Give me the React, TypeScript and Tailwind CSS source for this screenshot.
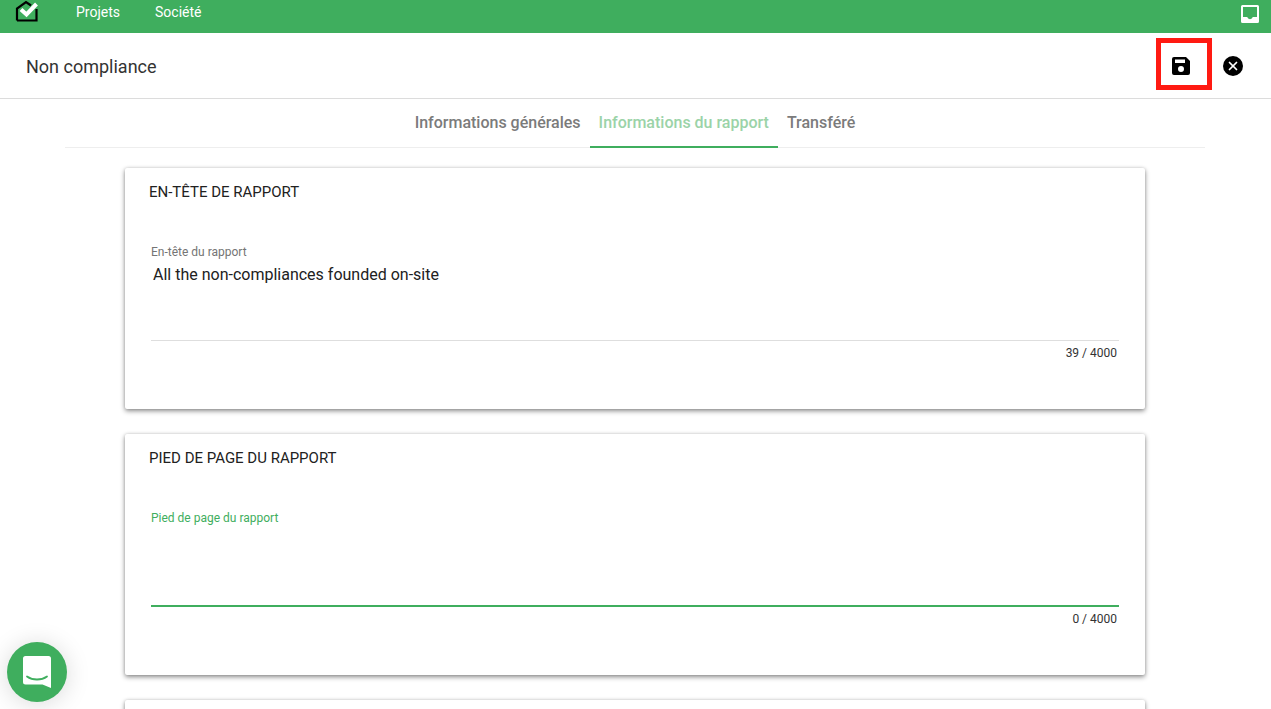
import { X } from "lucide-react"

function Logo() {
  return (
    <svg width="24" height="22" viewBox="0 0 24 22" fill="none">
      <path d="M2 20.5V8.5L11 2l5 3.5" stroke="#000" strokeWidth="2.2" />
      <path d="M2 20.5h19.5V9" stroke="#000" strokeWidth="2.2" />
      <path d="M6 9.5l5.500 5L21.500 4" stroke="#fff" strokeWidth="4" />
    </svg>
  )
}

function InboxIcon() {
  return (
    <svg width="20" height="20" viewBox="0 0 20 20">
      <path
        fill="#fff"
        fillRule="evenodd"
        d="M2.500 1h15A1.500 1.500 0 0 1 19 2.500v15a1.500 1.500 0 0 1-1.500 1.500h-15A1.500 1.500 0 0 1 1 17.500v-15A1.500 1.500 0 0 1 2.500 1zM3 3v10h4.200a2.900 2.900 0 0 0 5.600 0H17V3z"
      />
    </svg>
  )
}

function SaveIcon() {
  return (
    <svg width="18" height="18" viewBox="0 0 18 18">
      <path
        fill="#000"
        fillRule="evenodd"
        d="M2 0h12l4 4v12a2 2 0 0 1-2 2H2a2 2 0 0 1-2-2V2a2 2 0 0 1 2-2zm1 2.500V6h10V2.500zM9 9a3 3 0 1 0 0 6 3 3 0 0 0 0-6z"
      />
    </svg>
  )
}

function ChatIcon() {
  return (
    <svg width="28" height="32" viewBox="0 0 28 32">
      <path
        fill="#fff"
        d="M2.500 0h23A2.500 2.500 0 0 1 28 2.500V32l-8.500-3.500H2.500A2.500 2.500 0 0 1 0 26V2.500A2.500 2.500 0 0 1 2.500 0z"
      />
      <path d="M4 20.500c5.500 4 14.500 4 20 0" fill="none" stroke="#3fae5e" strokeWidth="1.800" strokeLinecap="round" />
    </svg>
  )
}

function ReportCard({ title, label, value, count, focused }: {
  title: string
  label: string
  value?: string
  count: string
  focused?: boolean
}) {
  return (
    <section className="h-[241px] shrink-0 bg-white px-6 pt-[15px] rounded-[2px] shadow-[0_2px_5px_rgba(0,0,0,0.45),0_0_3px_rgba(0,0,0,0.12)]">
      <h2 className="text-[15px] leading-[18px] text-[#212121]">{title}</h2>
      <div className="mt-[43px] mx-[2px]">
        <div className={`text-[12px] leading-[16px] ${focused ? "text-[#3fae5e]" : "text-[#757575]"}`}>{label}</div>
        <div className={`h-[81px] pl-[2px] pt-[3px] text-[16px] leading-[24px] text-[#212121] ${focused ? "border-b-2 border-[#3fae5e]" : "border-b border-[#dedede]"}`}>
          {value}
        </div>
        <div className="mt-[4px] pr-[2px] text-right text-[12px] leading-[16px] text-[#333]">{count}</div>
      </div>
    </section>
  )
}

export default function App() {
  return (
    <div className="relative h-[709px] w-[1271px] overflow-hidden bg-white font-['Roboto',sans-serif]">
      {/* top bar */}
      <header className="flex h-[33px] items-center bg-[#3fae5e] pl-[15px] pr-[11px] pb-[9px] text-white">
        <div className="-mt-[2px]">
          <Logo />
        </div>
        <nav className="ml-[37px] flex gap-[35px] text-[14px] leading-[18px]">
          <span>Projets</span>
          <span>Société</span>
        </nav>
        <div className="ml-auto mt-[4px]">
          <InboxIcon />
        </div>
      </header>

      {/* title bar */}
      <div className="flex h-[66px] items-center border-b border-[#dcdcdc] pl-[26px] pr-[28px]">
        <h1 className="pt-[2px] text-[18px] text-[#333]">Non compliance</h1>
        <div className="ml-auto flex items-center gap-[33px]">
          <SaveIcon />
          <span className="flex h-5 w-5 items-center justify-center rounded-full bg-black text-white">
            <X size={14} strokeWidth={3} />
          </span>
        </div>
      </div>

      {/* tabs */}
      <div className="ml-[65px] flex h-[49px] w-[1140px] justify-center border-b border-[#eeeeee] text-[16px] font-medium">
        <div className="flex h-[49px] items-center px-[9px] pb-[1px] text-[#7b7b7b]">Informations générales</div>
        <div className="flex h-[49px] items-center border-b-2 border-[#3fae5e] px-[9px] pt-[1px] text-[#9bd3a8]">Informations du rapport</div>
        <div className="flex h-[49px] items-center px-[9px] pb-[1px] text-[#7b7b7b]">Transféré</div>
      </div>

      {/* cards */}
      <main className="mx-[125px] mt-[20px] flex w-[1020px] flex-col gap-[25px]">
        <ReportCard
          title="EN-TÊTE DE RAPPORT"
          label="En-tête du rapport"
          value="All the non-compliances founded on-site"
          count="39 / 4000"
        />
        <ReportCard
          title="PIED DE PAGE DU RAPPORT"
          label="Pied de page du rapport"
          count="0 / 4000"
          focused
        />
        <section className="h-[241px] shrink-0 bg-white rounded-[2px] shadow-[0_2px_5px_rgba(0,0,0,0.45),0_0_3px_rgba(0,0,0,0.12)]" />
      </main>

      {/* annotation */}
      <div className="absolute left-[1156px] top-[38px] h-[52px] w-[56px] border-[5px] border-[#ff1a12]" />

      {/* chat launcher */}
      <div className="absolute left-[7px] top-[642px] flex h-[60px] w-[60px] items-center justify-center rounded-full bg-[#3fae5e] shadow-[0_2px_24px_rgba(0,0,0,0.15)]">
        <ChatIcon />
      </div>
    </div>
  )
}
